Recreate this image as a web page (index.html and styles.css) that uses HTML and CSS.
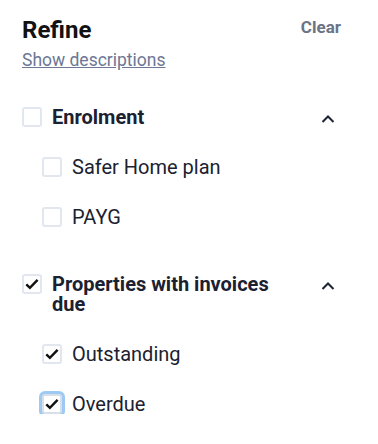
FILE: index.html
```html
<!DOCTYPE html>
<html>
<head>
<meta charset="utf-8">
<link rel="stylesheet" href="styles.css">
</head>
<body>
<div class="panel">
  <div class="header">
    <div class="head-left">
      <h1 class="title">Refine</h1>
      <a class="desc-link" href="#">Show descriptions</a>
    </div>
    <button class="clear">Clear</button>
  </div>

  <section class="group">
    <div class="group-head">
      <span class="box"></span>
      <span class="group-label">Enrolment</span>
      <svg class="chev" width="14" height="10" viewBox="0 0 14 10"><path d="M1.5 8 L7 2.5 L12.5 8" fill="none" stroke="#1d2433" stroke-width="2"/></svg>
    </div>
    <div class="option"><span class="box"></span><span class="opt-label">Safer Home plan</span></div>
    <div class="option"><span class="box"></span><span class="opt-label">PAYG</span></div>
  </section>

  <section class="group">
    <div class="group-head">
      <span class="box checked"><svg width="14" height="12" viewBox="0 0 14 12"><path d="M1.3 6.3 L4.9 9.9 L12.6 1.8" fill="none" stroke="#111" stroke-width="2.4"/></svg></span>
      <span class="group-label">Properties with invoices due</span>
      <svg class="chev" width="14" height="10" viewBox="0 0 14 10"><path d="M1.5 8 L7 2.5 L12.5 8" fill="none" stroke="#1d2433" stroke-width="2"/></svg>
    </div>
    <div class="option"><span class="box checked"><svg width="14" height="12" viewBox="0 0 14 12"><path d="M1.3 6.3 L4.9 9.9 L12.6 1.8" fill="none" stroke="#111" stroke-width="2.4"/></svg></span><span class="opt-label">Outstanding</span></div>
    <div class="option"><span class="box checked focus"><svg width="14" height="12" viewBox="0 0 14 12"><path d="M1.3 6.3 L4.9 9.9 L12.6 1.8" fill="none" stroke="#111" stroke-width="2.4"/></svg></span><span class="opt-label">Overdue</span></div>
  </section>
</div>
</body>
</html>
```
FILE: styles.css
```css
* { box-sizing: border-box; }
body {
  margin: 0;
  background: #fff;
  font-family: Roboto, "Liberation Sans", sans-serif;
  color: #1b2130;
}
.panel {
  padding: 14px 37px 0 22px;
}
.header {
  display: flex;
  justify-content: space-between;
  align-items: flex-start;
}
.head-left {
  display: flex;
  flex-direction: column;
}
.title {
  margin: 0;
  font-size: 24px;
  font-weight: 700;
  line-height: 32px;
  color: #121212;
}
.desc-link {
  font-size: 17.5px;
  line-height: 24px;
  color: #6b7795;
  text-decoration: underline;
  margin-top: 2px;
}
.clear {
  border: 0;
  background: none;
  padding: 0;
  margin-top: 2px;
  font-family: inherit;
  font-size: 17px;
  font-weight: 700;
  line-height: 22px;
  color: #6b7386;
}
.group {
  margin-top: 35px;
}
.group + .group {
  margin-top: 47px;
}
.group-head {
  display: flex;
  align-items: flex-start;
}
.box {
  flex: none;
  width: 20px;
  height: 20px;
  border: 2px solid #e1e6ef;
  border-radius: 3px;
  display: flex;
  align-items: center;
  justify-content: center;
  background: #fff;
}
.box.focus {
  box-shadow: 0 0 0 3px #9ec9f2;
  border-color: #d9dfe9;
}
.group-label {
  flex: 1;
  margin-left: 10px;
  font-size: 20px;
  font-weight: 700;
  line-height: 20px;
  padding-right: 22px;
}
.chev {
  flex: none;
  margin-top: 7px;
  margin-right: 6px;
}
.option {
  display: flex;
  align-items: center;
  margin-left: 20px;
  margin-top: 30px;
}
.opt-label {
  margin-left: 10px;
  font-size: 20px;
  line-height: 20px;
}
```
